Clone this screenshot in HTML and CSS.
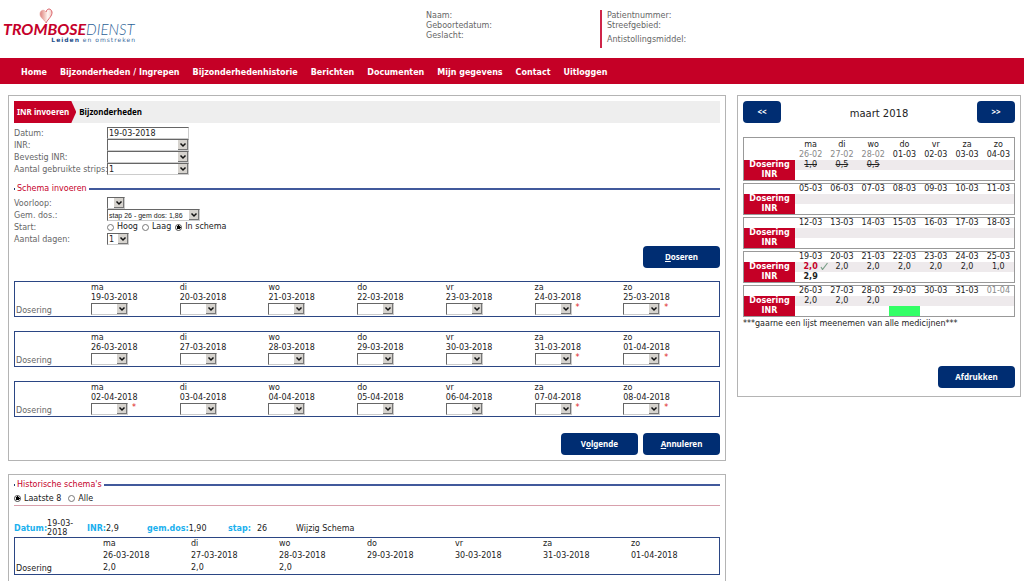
FILE: index.html
```html
<!DOCTYPE html>
<html lang="nl">
<head>
<meta charset="utf-8">
<title>Trombosedienst Leiden en omstreken</title>
<link rel="stylesheet" href="styles.css">
</head>
<body>
<header class="top">
  <a class="logo" href="#" aria-label="Trombosedienst">
    <svg class="logo-heart" viewBox="0 0 14 16" aria-hidden="true">
      <defs><linearGradient id="hg" x1="0" x2="1" y1="0" y2="0"><stop offset="0" stop-color="#dd7f7c"/><stop offset=".35" stop-color="#f0bfb8"/><stop offset=".65" stop-color="#fff8f5"/><stop offset="1" stop-color="#f3c9c4"/></linearGradient></defs>
      <path d="M7 15C6 12 1 10 1 6C1 2 5 1 7 4C8 0 12 0 13 4C13.500 8 9 11 7 15Z" fill="url(#hg)"/>
      <path d="M7 4C8 0 12 0 13 4C13.500 8 9 11 7 15" fill="none" stroke="#d6525a" stroke-width=".9"/>
      <path d="M7 15C6 12 1 10 1 6C1 2 5 1 7 4" fill="none" stroke="#e39a96" stroke-width=".6"/>
    </svg>
    <span class="logo-name"><b>TROMBOSE</b>DIENST</span>
    <span class="logo-sub"><b>Leiden</b> en omstreken</span>
  </a>
  <div class="person"><span>Naam:</span><span>Geboortedatum:</span><span>Geslacht:</span></div>
  <div class="person treatment"><span>Patientnummer:</span><span>Streefgebied:</span><span class="apart">Antistollingsmiddel:</span></div>
</header>
<nav class="menu">
  <a href="#">Home</a><a href="#">Bijzonderheden / Ingrepen</a><a href="#">Bijzonderhedenhistorie</a><a href="#">Berichten</a><a href="#">Documenten</a><a href="#">Mijn gegevens</a><a href="#">Contact</a><a href="#">Uitloggen</a>
</nav>
<main class="page">
  <div class="left">
    <form class="panel entry">
      <div class="steps"><span class="step-on">INR invoeren</span><span class="step">Bijzonderheden</span></div>
      <div class="fields">
        <label for="datum">Datum:</label><input class="text" id="datum" type="text" value="19-03-2018">
        <label for="inr">INR:</label><select class="wide" id="inr"><option></option></select>
        <label for="inr2">Bevestig INR:</label><select class="wide" id="inr2"><option></option></select>
        <label for="strips">Aantal gebruikte strips:</label><select class="wide" id="strips"><option>1</option></select>
      </div>
      <h2 class="rule-title">Schema invoeren</h2>
      <div class="fields">
        <label for="voorloop">Voorloop:</label><select class="tiny" id="voorloop"><option></option></select>
        <label for="gem">Gem. dos.:</label><select class="step-select" id="gem"><option>stap 26 - gem dos: 1,86</option></select>
        <span>Start:</span>
        <div class="radios">
          <label><input type="radio" name="start">Hoog</label><label><input type="radio" name="start">Laag</label><label><input type="radio" name="start" checked>In schema</label>
        </div>
        <label for="dagen">Aantal dagen:</label><select class="small" id="dagen"><option>1</option></select>
      </div>
      <div class="actions"><button class="btn" type="button"><u>D</u>oseren</button></div>
      <div class="weeks" id="weeks"></div>
      <div class="actions"><button class="btn" type="button">V<u>o</u>lgende</button><button class="btn" type="button"><u>A</u>nnuleren</button></div>
    </form>
    <section class="panel history">
      <h2 class="rule-title">Historische schema's</h2>
      <div class="radios dark">
        <label><input type="radio" name="hist" checked>Laatste 8</label><label><input type="radio" name="hist">Alle</label>
      </div>
      <div class="summary">
        <div class="s-date"><b>Datum:</b><span>19-03-2018</span></div>
        <div class="s-inr"><b>INR:</b>2,9</div>
        <div class="s-avg"><b>gem.dos:</b>1,90</div>
        <div class="s-step"><b>stap:</b><span>26</span></div>
        <a href="#">Wijzig Schema</a>
      </div>
      <table class="hist-table">
        <tr><td></td><td>ma</td><td>di</td><td>wo</td><td>do</td><td>vr</td><td>za</td><td>zo</td></tr>
        <tr><td></td><td>26-03-2018</td><td>27-03-2018</td><td>28-03-2018</td><td>29-03-2018</td><td>30-03-2018</td><td>31-03-2018</td><td>01-04-2018</td></tr>
        <tr><th scope="row">Dosering</th><td>2,0</td><td>2,0</td><td>2,0</td><td></td><td></td><td></td><td></td></tr>
      </table>
    </section>
  </div>
  <aside class="panel calendar">
    <div class="month"><button class="btn nav-btn" type="button">&lt;&lt;</button><h1>maart 2018</h1><button class="btn nav-btn" type="button">&gt;&gt;</button></div>
    <div class="cal-weeks" id="calendar"></div>
    <p class="note">***gaarne een lijst meenemen van alle medicijnen***</p>
    <div class="actions"><button class="btn" type="button">Afdrukken</button></div>
  </aside>
</main>
<script src="script.js"></script>
</body>
</html>
```
FILE: styles.css
```css
* { box-sizing: border-box; }
html { scrollbar-width: none; }
body { margin: 0; background: #fff; color: #222; font: 8px/10px "DejaVu Sans", Verdana, sans-serif; }
a { color: inherit; text-decoration: none; }
h1, h2, p { margin: 0; font-weight: normal; }
input, select, button { margin: 0; font: inherit; color: inherit; }
table { width: 100%; border-collapse: separate; border-spacing: 0; table-layout: fixed; }
td, th { padding: 0; text-align: left; font-weight: normal; }

.top { display: grid; grid-template-columns: 426px 174px 1fr; height: 58px; color: #666; align-items: start; }
.logo { display: flex; flex-direction: column; padding: 8px 0 0 3px; width: 136px; }
.logo-heart { width: 14px; height: 16px; margin-left: 36px; }
.logo-name { font: italic 300 15px/14px Lato, sans-serif; color: #2c6096; margin-top: -2px; white-space: nowrap; }
.logo-name b { color: #c5002a; font-size: 16px; font-weight: 700; }
.logo-sub { font: 6px/7px "DejaVu Sans", sans-serif; color: #3a6b9c; letter-spacing: 1px; text-align: right; white-space: nowrap; }
.logo-sub b { color: #1d4f8c; }
.person { display: flex; flex-direction: column; padding-top: 11px; }
.treatment { margin-top: 10px; padding: 1px 0 3px 5px; border-left: 2px solid #cf2549; }
.apart { margin-top: 4px; }

.menu { display: flex; gap: 13px; height: 26px; padding: 4px 21px 0; align-items: center; background: #c50026; color: #fff; font-weight: bold; }

.page { display: grid; grid-template-columns: 1fr 284px; gap: 11px; align-items: start; padding: 11px 3px 0 8px; }
.left { display: grid; gap: 13px; min-width: 0; }
.panel { border: 1px solid #b4b4b4; padding: 5px; }

.steps { display: flex; height: 22px; align-items: center; background: #eee; font: bold 8px/10px "Noto Sans", sans-serif; color: #000; }
.step-on { padding: 6px 7px 6px 3px; background: #c50026; color: #fff; clip-path: polygon(0 0, calc(100% - 5px) 0, 100% 50%, calc(100% - 5px) 100%, 0 100%); }
.step { padding-left: 3px; }
.fields { display: grid; grid-template-columns: 93px 1fr; grid-auto-rows: 12px; align-items: center; color: #666; white-space: nowrap; }
.fields > label, .fields > span { padding-top: 1px; }
.steps + .fields { margin-top: 4px; }
.text, select { appearance: none; height: 12px; border: 1px solid #ccc; border-top-color: #666; border-left-color: #666; border-radius: 0; padding: 0 1px; background-color: #fff; color: #222; line-height: 9px; }
.text { width: 82px; }
select { background-image: url("data:image/svg+xml,%3Csvg xmlns='http://www.w3.org/2000/svg' viewBox='0 0 10 10'%3E%3Cpath d='M0 0h10v10H0z' fill='%23777'/%3E%3Cpath d='M0 0h9v9H0z' fill='%23d6d3ce'/%3E%3Cpath d='M2.500 3.500L5 6L7.500 3.500' fill='none' stroke='%23111' stroke-width='1.500'/%3E%3C/svg%3E"); background-repeat: no-repeat; background-position: right center; background-size: 10px 10px; }
.wide { width: 82px; }
.tiny { width: 18px; }
.small { width: 22px; }
.step-select { width: 93px; font: 7px/9px "Liberation Sans", Arial, sans-serif; }
.dose { width: 37px; }
.radios { display: flex; gap: 4px; color: #222; }
.radios label { display: flex; align-items: center; gap: 3px; }
.radios input { appearance: none; width: 7px; height: 7px; border: 1px solid #777; border-radius: 50%; background: #fff; }
.radios input:checked { background: radial-gradient(circle, #000 0 2px, #fff 2px); border-color: #444; }
.rule-title { display: flex; align-items: center; gap: 2px; font-size: 8px; line-height: 10px; color: #c5002a; white-space: nowrap; }
.rule-title::before { content: ""; width: 1px; height: 2px; background: #223a6c; }
.rule-title::after { content: ""; flex: 1; height: 2px; background: #41599c; }
.entry .rule-title { margin: 9px 0 3px; }
.entry .actions { margin-top: 1px; }

.actions { display: flex; justify-content: flex-end; gap: 5px; }
.btn { width: 77px; height: 22px; padding: 0; border: 0; border-radius: 4px; background: #002d72; color: #fff; font: bold 8px/10px "Noto Sans", sans-serif; }
.weeks { display: grid; gap: 14px; margin: 13px 0 16px; }
.week { border: 1px solid #2b4684; }
.week .head { width: 10.8%; }
.week .day { width: 12.6%; }
.week th, .hist-table th { padding-left: 1px; vertical-align: bottom; }
.week th { color: #666; }
.week td { white-space: nowrap; }
.week tr { height: 10px; }
.week tr:first-child td { padding-top: 1px; }
.dose-cell { display: flex; gap: 4px; height: 13px; align-items: flex-start; }
.req { color: #d22; }

.history { padding-bottom: 20px; }
.dark { gap: 7px; padding-bottom: 1px; margin-top: 3px; height: 13px; border-bottom: 1px solid #d8a0ac; }
.summary { display: flex; align-items: center; margin-top: 13px; height: 18px; line-height: 9px; }
.summary b { color: #1ab0ee; }
.s-date { display: flex; align-items: center; width: 73px; }
.s-date span { width: 30px; }
.s-inr { width: 60px; }
.s-avg { width: 81px; }
.s-step { display: flex; gap: 6px; width: 68px; }
.hist-table { border: 1px solid #2b4684; }
.hist-table tr { height: 12px; }
.hist-table td:first-child { width: 88px; }

.month { display: flex; justify-content: space-between; align-items: center; }
.month h1 { font-size: 10px; line-height: 14px; padding-top: 4px; }
.nav-btn { width: 38px; }
.cal-weeks { display: grid; gap: 2px; margin-top: 14px; }
.cal-week { border: 1px solid #999; text-align: center; }
.cal-week td { height: 10px; text-align: center; }
.cal-week .names td { height: 12px; padding-top: 1px; }
.cal-week th { width: 51px; background: #c50026; color: #fff; font-weight: bold; text-align: center; }
.cal-week td:first-child { width: 51px; }
.dosing td { background: #eeeaec; }
.cal-week .other { color: #888; }
.cal-week .free { background: #3f6; }
.cal-week .today { color: #c5002a; font-weight: bold; white-space: nowrap; }
.check { width: 8px; height: 8px; margin: 0 -10px 0 2px; vertical-align: top; }
.note { margin-top: 2px; white-space: nowrap; }
.calendar .actions { margin-top: 37px; }
.calendar { padding-bottom: 8px; }
```
FILE: script.js
```js
const days = ['ma', 'di', 'wo', 'do', 'vr', 'za', 'zo'];

const entryWeeks = [
  { dates: ['19-03', '20-03', '21-03', '22-03', '23-03', '24-03', '25-03'], required: [5, 6] },
  { dates: ['26-03', '27-03', '28-03', '29-03', '30-03', '31-03', '01-04'], required: [5, 6] },
  { dates: ['02-04', '03-04', '04-04', '05-04', '06-04', '07-04', '08-04'], required: [0, 5, 6] }
];

document.getElementById('weeks').innerHTML = entryWeeks.map(week => `
  <table class="week">
    <colgroup><col class="head">${'<col class="day">'.repeat(6)}<col></colgroup>
    <tr><td></td>${days.map(d => `<td>${d}</td>`).join('')}</tr>
    <tr><td></td>${week.dates.map(d => `<td>${d}-2018</td>`).join('')}</tr>
    <tr><th scope="row">Dosering</th>${week.dates.map((d, i) => `<td><div class="dose-cell"><select class="dose" aria-label="Dosering ${d}-2018"><option></option></select>${week.required.includes(i) ? '<span class="req">*</span>' : ''}</div></td>`).join('')}</tr>
  </table>`).join('');

const check = '<svg class="check" viewBox="0 0 8 8"><path d="M1 5L2.500 7.500L7.500 1" fill="none" stroke="#7a9f88" stroke-width="1.200"/></svg>';
const calendar = [
  { dates: ['26-02', '27-02', '28-02', '01-03', '02-03', '03-03', '04-03'], other: [0, 1, 2], dose: ['<s>1,0</s>', '<s>0,5</s>', '<s>0,5</s>'], head: true },
  { dates: ['05-03', '06-03', '07-03', '08-03', '09-03', '10-03', '11-03'] },
  { dates: ['12-03', '13-03', '14-03', '15-03', '16-03', '17-03', '18-03'] },
  { dates: ['19-03', '20-03', '21-03', '22-03', '23-03', '24-03', '25-03'], dose: ['2,0' + check, '2,0', '2,0', '2,0', '2,0', '2,0', '1,0'], inr: ['<b>2,9</b>'], today: 0 },
  { dates: ['26-03', '27-03', '28-03', '29-03', '30-03', '31-03', '01-04'], other: [6], dose: ['2,0', '2,0', '2,0'], free: 3 }
];

document.getElementById('calendar').innerHTML = calendar.map(w => {
  const cells = fn => w.dates.map((d, i) => fn(d, i)).join('');
  return `<table class="cal-week">
    ${w.head ? `<tr class="names"><td></td>${days.map(d => `<td>${d}</td>`).join('')}</tr>` : ''}
    <tr><td></td>${cells((d, i) => `<td class="${(w.other || []).includes(i) ? 'other' : ''}">${d}</td>`)}</tr>
    <tr class="dosing"><th scope="row">Dosering</th>${cells((d, i) => `<td class="${w.today === i ? 'today' : ''}">${(w.dose || [])[i] || ''}</td>`)}</tr>
    <tr><th scope="row">INR</th>${cells((d, i) => `<td class="${w.free === i ? 'free' : ''}">${(w.inr || [])[i] || ''}</td>`)}</tr>
  </table>`;
}).join('');
```
